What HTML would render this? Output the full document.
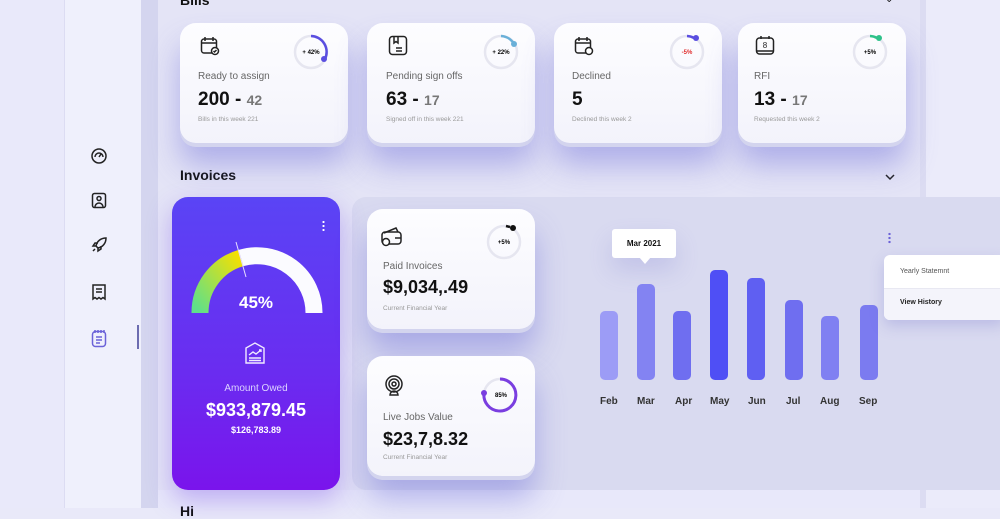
<!DOCTYPE html>
<html><head><meta charset="utf-8"><style>
*{box-sizing:border-box;margin:0;padding:0}
body{width:1000px;height:508px;overflow:hidden;background:#e9e9f9;font-family:"Liberation Sans",sans-serif;position:relative;color:#111}
.abs{position:absolute}
.card{position:absolute;background:linear-gradient(180deg,#fdfdff,#f3f3fb);border-radius:16px;box-shadow:0 4px 0 #d3d4ee,0 22px 30px rgba(100,100,215,.42)}
.lbl{position:absolute;font-size:10px;color:#666}
.big{position:absolute;font-size:19px;font-weight:bold;color:#111}
.big span{font-size:14px;color:#777}
.sm{position:absolute;font-size:6.5px;color:#999}
.ring{position:absolute}
</style></head><body>
<div class="abs" style="left:0;top:0;width:64px;height:508px;background:#e9e9fa"></div>
<div class="abs" style="left:64px;top:0;width:78px;height:508px;background:#eff0fc;border-left:1px solid #dcdcf2"></div>
<div class="abs" style="left:141px;top:0;width:17px;height:508px;background:#d4d5ef"></div>
<div class="abs" style="left:158px;top:0;width:762px;height:508px;background:#e4e4f6"></div>
<div class="abs" style="left:920px;top:0;width:80px;height:508px;background:#ebebfa;border-left:6px solid #dcdcf2"></div>
<div class="abs" style="left:352px;top:197px;width:648px;height:293px;background:#d9daf0;border-radius:14px 0 0 14px"></div>
<div class="abs" style="left:158px;top:490px;width:762px;height:18px;background:#e8e8fa"></div>

<svg class="abs" style="left:90px;top:147px" width="18" height="18" viewBox="0 0 18 18" fill="none" stroke="#222" stroke-width="1.5"><circle cx="9" cy="9" r="7"/><path d="M5 10a4 4 0 0 1 8 0M9 10l2-3"/></svg>
<svg class="abs" style="left:91px;top:192px" width="16" height="17" viewBox="0 0 16 17" fill="none" stroke="#222" stroke-width="1.5"><rect x="1.5" y="1.5" width="13" height="14" rx="2"/><circle cx="8" cy="6.5" r="2"/><path d="M4 15a4 4 0 0 1 8 0"/></svg>
<svg class="abs" style="left:90px;top:236px" width="18" height="18" viewBox="0 0 18 18" fill="none" stroke="#222" stroke-width="1.5"><path d="M16 2c-5 0-9 3-10 8l2 2c5-1 8-5 8-10zM6 10l-3 0 2-3h3M8 12v3l3-2v-3M5 13l-2 2"/></svg>
<svg class="abs" style="left:91px;top:283px" width="16" height="18" viewBox="0 0 16 18" fill="none" stroke="#222" stroke-width="1.5"><path d="M2 2h12v14l-2-1.5-2 1.5-2-1.5-2 1.5-2-1.5-2 1.5z"/><path d="M5 6h6M5 9h6"/></svg>
<svg class="abs" style="left:91px;top:329px" width="16" height="19" viewBox="0 0 16 19" fill="none" stroke="#6b62d8" stroke-width="1.5"><rect x="1.5" y="2.5" width="13" height="15" rx="3"/><path d="M4 1v3M7 1v3M10 1v3M13 1v3M5 8h6M5 11h6M5 14h4"/></svg>
<div class="abs" style="left:137px;top:325px;width:1.5px;height:24px;background:#6c6cb0"></div>

<div class="abs" style="left:180px;top:-8px;font-size:14px;font-weight:bold">Bills</div>
<div class="abs" style="left:885px;top:-6px;font-size:10px">&#8964;</div>
<div class="abs" style="left:180px;top:167px;font-size:14px;font-weight:bold">Invoices</div>
<svg class="abs" style="left:885px;top:174px" width="10" height="7"><path d="M1 1l4 4 4-4" stroke="#222" stroke-width="1.5" fill="none"/></svg>
<div class="abs" style="left:180px;top:503px;font-size:14px;font-weight:bold">Hi</div>

<div class="card" style="left:180px;top:23px;width:168px;height:120px"></div>
<div class="card" style="left:367px;top:23px;width:168px;height:120px"></div>
<div class="card" style="left:554px;top:23px;width:168px;height:120px"></div>
<div class="card" style="left:738px;top:23px;width:168px;height:120px"></div>

<svg class="abs" style="left:200px;top:36px" width="20" height="20" viewBox="0 0 20 20" fill="none" stroke="#222" stroke-width="1.5"><rect x="1.5" y="3" width="15" height="14" rx="2.5"/><path d="M1.5 7h15M5 1v4M13 1v4"/><circle cx="15" cy="15" r="3.5" fill="#fff"/><path d="M13.5 15l1 1 2-2"/></svg>
<div class="lbl" style="left:198px;top:71px">Ready to assign</div>
<div class="big" style="left:198px;top:89px">200 - <span>42</span></div>
<div class="sm" style="left:198px;top:116px">Bills in this week 221</div>
<svg class="ring" style="left:291px;top:32px" width="40" height="40"><circle cx="20" cy="20" r="16" fill="none" stroke="#e6e6f0" stroke-width="2.5"/><path d="M20 4A16 16 0 0 1 34 27" stroke="#5a4ee0" stroke-width="2.5" fill="none"/><circle cx="33" cy="27" r="3" fill="#5a4ee0"/><text x="20" y="22" font-size="6" font-weight="bold" text-anchor="middle" font-family="Liberation Sans">+ 42%</text></svg>

<svg class="abs" style="left:388px;top:35px" width="20" height="21" viewBox="0 0 20 21" fill="none" stroke="#222" stroke-width="1.5"><rect x="1.5" y="1.5" width="17" height="18" rx="3"/><path d="M6 2v6l2-1.5 2 1.5V2M8 13h6M8 16h6"/></svg>
<div class="lbl" style="left:386px;top:71px">Pending sign offs</div>
<div class="big" style="left:386px;top:89px">63 - <span>17</span></div>
<div class="sm" style="left:386px;top:116px">Signed off in this week 221</div>
<svg class="ring" style="left:481px;top:32px" width="40" height="40"><circle cx="20" cy="20" r="16" fill="none" stroke="#e6e6f0" stroke-width="2.5"/><path d="M20 4A16 16 0 0 1 33 12" stroke="#6ab0d8" stroke-width="2.5" fill="none"/><circle cx="33" cy="12" r="3" fill="#6ab0d8"/><text x="20" y="22" font-size="6" font-weight="bold" text-anchor="middle" font-family="Liberation Sans">+ 22%</text></svg>

<svg class="abs" style="left:574px;top:36px" width="20" height="20" viewBox="0 0 20 20" fill="none" stroke="#222" stroke-width="1.5"><rect x="1.5" y="3" width="15" height="14" rx="2.5"/><path d="M1.5 7h15M5 1v4M13 1v4"/><circle cx="15" cy="15" r="3.5" fill="#fff"/></svg>
<div class="lbl" style="left:572px;top:71px">Declined</div>
<div class="big" style="left:572px;top:89px">5</div>
<div class="sm" style="left:572px;top:116px">Declined this week 2</div>
<svg class="ring" style="left:667px;top:32px" width="40" height="40"><circle cx="20" cy="20" r="16" fill="none" stroke="#e6e6f0" stroke-width="2.5"/><path d="M20 4A16 16 0 0 1 27 6" stroke="#5a4ee0" stroke-width="2.5" fill="none"/><circle cx="29" cy="6" r="3" fill="#5a4ee0"/><text x="20" y="22" font-size="6" font-weight="bold" fill="#e03030" text-anchor="middle" font-family="Liberation Sans">-5%</text></svg>

<svg class="abs" style="left:755px;top:35px" width="20" height="21" viewBox="0 0 20 21" fill="none" stroke="#222" stroke-width="1.5"><rect x="1.5" y="3" width="17" height="16" rx="3"/><path d="M6 1v3M14 1v3M1.5 16h17"/><text x="10" y="13" font-size="8" stroke="none" fill="#222" text-anchor="middle" font-family="Liberation Sans">8</text></svg>
<div class="lbl" style="left:754px;top:71px">RFI</div>
<div class="big" style="left:754px;top:89px">13 - <span>17</span></div>
<div class="sm" style="left:754px;top:116px">Requested this week 2</div>
<svg class="ring" style="left:850px;top:32px" width="40" height="40"><circle cx="20" cy="20" r="16" fill="none" stroke="#e6e6f0" stroke-width="2.5"/><path d="M20 4A16 16 0 0 1 27 6" stroke="#2ec28a" stroke-width="2.5" fill="none"/><circle cx="29" cy="6" r="3" fill="#2ec28a"/><text x="20" y="22" font-size="6" font-weight="bold" text-anchor="middle" font-family="Liberation Sans">+5%</text></svg>

<div class="abs" style="left:172px;top:197px;width:168px;height:293px;border-radius:16px;background:linear-gradient(180deg,#5a44f5 0%,#6a2cf0 60%,#7a14ec 100%);box-shadow:0 10px 25px rgba(110,60,230,.35)"></div>
<div class="abs" style="left:322px;top:220px;width:3px;height:12px;background:radial-gradient(circle,#fff 1px,transparent 1.2px) 0 0/3px 4px"></div>
<svg class="abs" style="left:172px;top:230px" width="168" height="100">
<defs><linearGradient id="g1" x1="0" y1="1" x2="1" y2="0"><stop offset="0" stop-color="#5fe08a"/><stop offset="1" stop-color="#f6e000"/></linearGradient></defs>
<path d="M28 83A57 57 0 0 1 69 28" stroke="url(#g1)" stroke-width="17" fill="none"/>
<path d="M69 28A57 57 0 0 1 142 83" stroke="#fbfbff" stroke-width="17" fill="none"/>
<path d="M64 12L74 47" stroke="#e8e0ff" stroke-width="1"/>
<text x="84" y="78" font-size="17" font-weight="bold" fill="#fff" text-anchor="middle" font-family="Liberation Sans">45%</text>
</svg>
<svg class="abs" style="left:244px;top:341px" width="22" height="24" viewBox="0 0 22 24" fill="none" stroke="#f0eaff" stroke-width="1.4"><path d="M2 7l9-5 9 5v15H2z"/><path d="M5 14l4-3 3 2 5-4M15 9h2v2M5 17h12M5 19.5h12"/></svg>
<div class="abs" style="left:172px;top:383px;width:168px;text-align:center;font-size:10px;color:#dcd4ff">Amount Owed</div>
<div class="abs" style="left:172px;top:400px;width:168px;text-align:center;font-size:18px;font-weight:bold;color:#fff">$933,879.45</div>
<div class="abs" style="left:172px;top:425px;width:168px;text-align:center;font-size:9px;font-weight:bold;color:#fff">$126,783.89</div>

<div class="card" style="left:367px;top:209px;width:168px;height:120px"></div>
<svg class="abs" style="left:380px;top:225px" width="24" height="22" viewBox="0 0 24 22" fill="none" stroke="#222" stroke-width="1.5"><path d="M4 8l12-5 2 4"/><rect x="2" y="7" width="19" height="12" rx="3"/><path d="M15 13h6"/><circle cx="6" cy="17" r="3.5" fill="#fff"/></svg>
<div class="lbl" style="left:383px;top:261px">Paid Invoices</div>
<div class="big" style="left:383px;top:277px;font-size:18px">$9,034,.49</div>
<div class="sm" style="left:383px;top:305px">Current Financial Year</div>
<svg class="ring" style="left:484px;top:222px" width="40" height="40"><circle cx="20" cy="20" r="16" fill="none" stroke="#e6e6f0" stroke-width="2.5"/><path d="M22 4L26 5" stroke="#111" stroke-width="2.5"/><circle cx="29" cy="6" r="3" fill="#111"/><text x="20" y="22" font-size="6" font-weight="bold" text-anchor="middle" font-family="Liberation Sans">+5%</text></svg>

<div class="card" style="left:367px;top:356px;width:168px;height:120px"></div>
<svg class="abs" style="left:384px;top:375px" width="20" height="22" viewBox="0 0 20 22" fill="none" stroke="#222" stroke-width="1.5"><circle cx="10" cy="9" r="8"/><circle cx="10" cy="9" r="5"/><circle cx="10" cy="9" r="2"/><path d="M6 20a4 4 0 0 1 8 0z"/></svg>
<div class="lbl" style="left:383px;top:412px">Live Jobs Value</div>
<div class="big" style="left:383px;top:429px;font-size:18px">$23,7,8.32</div>
<div class="sm" style="left:383px;top:454px">Current Financial Year</div>
<svg class="ring" style="left:480px;top:375px" width="40" height="40"><circle cx="20" cy="20" r="16" fill="none" stroke="#e6e6f0" stroke-width="2.5"/><path d="M20 4A16 16 0 1 1 4 18" stroke="#7a3ee0" stroke-width="3" fill="none"/><circle cx="4" cy="18" r="3" fill="#7a3ee0"/><text x="21" y="22" font-size="6" font-weight="bold" text-anchor="middle" font-family="Liberation Sans">85%</text></svg>

<div class="abs" style="left:612px;top:229px;width:64px;height:29px;background:#fff;border-radius:3px;font-size:8px;font-weight:bold;text-align:center;line-height:29px;box-shadow:0 12px 24px rgba(100,100,200,.2)">Mar 2021</div>
<div class="abs" style="left:639px;top:257px;width:0;height:0;border-left:6px solid transparent;border-right:6px solid transparent;border-top:7px solid #fff"></div>
<div class="abs" style="left:600px;top:311px;width:18px;height:69px;border-radius:5px;background:#9c9cf6"></div>
<div class="abs" style="left:637px;top:284px;width:18px;height:96px;border-radius:5px;background:#8383f2"></div>
<div class="abs" style="left:673px;top:311px;width:18px;height:69px;border-radius:5px;background:#6f6ef0"></div>
<div class="abs" style="left:710px;top:270px;width:18px;height:110px;border-radius:5px;background:#4f4ff5"></div>
<div class="abs" style="left:747px;top:278px;width:18px;height:102px;border-radius:5px;background:#5f5ff2"></div>
<div class="abs" style="left:785px;top:300px;width:18px;height:80px;border-radius:5px;background:#6f6ef0"></div>
<div class="abs" style="left:821px;top:316px;width:18px;height:64px;border-radius:5px;background:#8080f2"></div>
<div class="abs" style="left:860px;top:305px;width:18px;height:75px;border-radius:5px;background:#7b7bf0"></div>
<div class="abs" style="left:596px;top:396px;width:300px;font-size:10px;color:#333;font-weight:bold">
<span class="abs" style="left:4px">Feb</span><span class="abs" style="left:41px">Mar</span><span class="abs" style="left:79px">Apr</span><span class="abs" style="left:114px">May</span><span class="abs" style="left:152px">Jun</span><span class="abs" style="left:190px">Jul</span><span class="abs" style="left:224px">Aug</span><span class="abs" style="left:263px">Sep</span></div>
<div class="abs" style="left:888px;top:232px;width:3px;height:12px;background:radial-gradient(circle,#6b62d8 1.1px,transparent 1.3px) 0 0/3px 4px"></div>
<div class="abs" style="left:884px;top:255px;width:120px;height:65px;background:#fff;border-radius:6px 0 0 6px;box-shadow:0 6px 14px rgba(100,100,200,.25)"></div>
<div class="abs" style="left:884px;top:288px;width:120px;height:32px;background:#f4f4fb;border-top:1px solid #e8e8f2;border-radius:0 0 0 6px"></div>
<div class="abs" style="left:900px;top:268px;font-size:7px;color:#555">Yearly Statemnt</div>
<div class="abs" style="left:900px;top:299px;font-size:7px;font-weight:bold;color:#222">View History</div>
</body></html>
